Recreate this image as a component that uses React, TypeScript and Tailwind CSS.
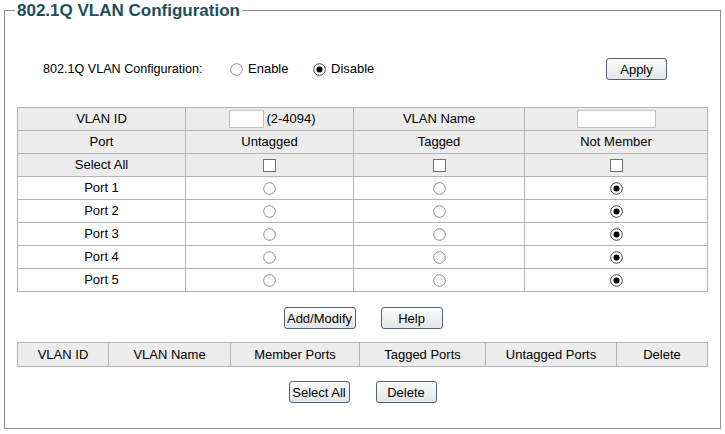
import React from 'react';

const font = { fontFamily: '"Liberation Sans", Arial, sans-serif' };

function Radio({ checked = false }: { checked?: boolean }) {
  return (
    <svg width="13" height="13" viewBox="0 0 13 13" className="inline-block shrink-0">
      <circle cx="6.5" cy="6.5" r="5.8" fill="#fff" stroke={checked ? '#444' : '#8a8a8a'} strokeWidth="1" />
      {checked && <circle cx="6.5" cy="6.5" r="3" fill="#000" />}
    </svg>
  );
}

function Checkbox() {
  return <span className="inline-block w-[13px] h-[13px] border border-[#6f6f6f] bg-white align-middle" />;
}

function Btn({ label, w }: { label: string; w: string }) {
  return (
    <button
      className={`${w} h-[22px] rounded-[3px] border border-[#56636e] bg-gradient-to-b from-[#fbfbfb] to-[#e2e4e6] text-[13px] text-black leading-none`}
    >
      {label}
    </button>
  );
}

const ports = ['Port 1', 'Port 2', 'Port 3', 'Port 4', 'Port 5'];

export default function App() {
  const td = 'border border-[#b4b4b4] h-[23px] p-0 text-center align-middle';
  const th = 'border border-[#b4b4b4] h-[24px] p-0 text-center align-middle font-normal';

  return (
    <div className="w-[725px] h-[434px] bg-white text-black text-[13px]" style={font}>
      <fieldset className="ml-[4px] w-[717px] h-[429px] border border-[#8c8c8c] p-0 m-0">
        <legend className="ml-[10px] px-[2px] text-[17px] leading-[21px] font-bold text-[#1b4f5c]">
          802.1Q VLAN Configuration
        </legend>

        {/* global enable / disable */}
        <div className="mt-[37px] flex items-center h-[22px]">
          <span className="ml-[38px] w-[187px] text-[12.6px]">802.1Q VLAN Configuration:</span>
          <label className="w-[83px] flex items-center gap-[5px]">
            <Radio />
            <span>Enable</span>
          </label>
          <label className="w-[293px] flex items-center gap-[5px]">
            <Radio checked />
            <span>Disable</span>
          </label>
          <Btn label="Apply" w="w-[61px]" />
        </div>

        {/* VLAN member table */}
        <table className="mt-[27px] ml-[12px] w-[690px] table-fixed border-collapse">
          <colgroup>
            <col className="w-[168px]" />
            <col className="w-[168px]" />
            <col className="w-[171px]" />
            <col className="w-[183px]" />
          </colgroup>
          <tbody>
            <tr className="bg-[#ececec]">
              <td className={td}>VLAN ID</td>
              <td className={td}>
                <div className="flex items-center justify-center pl-[6px]">
                  <span className="w-[35px] h-[18px] border border-[#b9c3cc] bg-white" />
                  <span className="ml-[2px]">(2-4094)</span>
                </div>
              </td>
              <td className={td}>VLAN Name</td>
              <td className={td}>
                <div className="flex justify-center">
                  <span className="w-[79px] h-[18px] border border-[#b9c3cc] bg-white" />
                </div>
              </td>
            </tr>
            <tr className="bg-[#ececec]">
              <td className={td}>Port</td>
              <td className={td}>Untagged</td>
              <td className={td}>Tagged</td>
              <td className={td}>Not Member</td>
            </tr>
            <tr className="bg-[#ececec]">
              <td className={td}>Select All</td>
              <td className={td}><Checkbox /></td>
              <td className={td}><Checkbox /></td>
              <td className={td}><Checkbox /></td>
            </tr>
            {ports.map((p) => (
              <tr key={p} className="bg-white">
                <td className={td}>{p}</td>
                <td className={td}><div className="flex justify-center"><Radio /></div></td>
                <td className={td}><div className="flex justify-center"><Radio /></div></td>
                <td className={td}><div className="flex justify-center"><Radio checked /></div></td>
              </tr>
            ))}
          </tbody>
        </table>

        <div className="mt-[15px] flex justify-center gap-[25px] pl-[1px]">
          <Btn label="Add/Modify" w="w-[72px]" />
          <Btn label="Help" w="w-[62px]" />
        </div>

        {/* VLAN list */}
        <table className="mt-[13px] ml-[12px] w-[690px] table-fixed border-collapse">
          <colgroup>
            <col className="w-[91px]" />
            <col className="w-[122px]" />
            <col className="w-[129px]" />
            <col className="w-[126px]" />
            <col className="w-[131px]" />
            <col className="w-[91px]" />
          </colgroup>
          <thead>
            <tr className="bg-[#ececec]">
              <th className={th}>VLAN ID</th>
              <th className={th}>VLAN Name</th>
              <th className={th}>Member Ports</th>
              <th className={th}>Tagged Ports</th>
              <th className={th}>Untagged Ports</th>
              <th className={th}>Delete</th>
            </tr>
          </thead>
        </table>

        <div className="mt-[14px] flex justify-center gap-[26px]">
          <Btn label="Select All" w="w-[61px]" />
          <Btn label="Delete" w="w-[61px]" />
        </div>
      </fieldset>
    </div>
  );
}
